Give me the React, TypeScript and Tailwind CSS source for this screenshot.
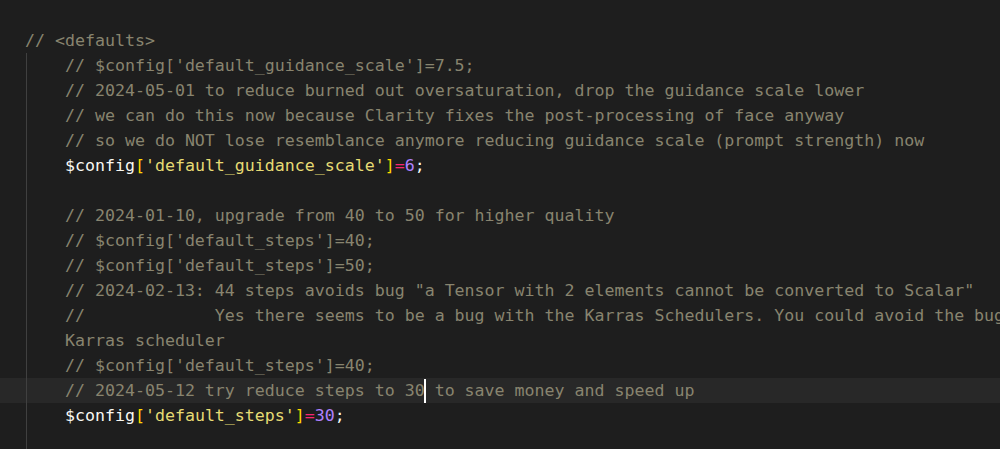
import React from 'react';

type Tok = { t: string; c: string };

const comment = 'text-[#88846f]';

const c = (t: string): Tok[] => [{ t, c: comment }];

const assign = (key: string, num: string): Tok[] => [
  { t: '$config', c: 'text-[#f8f8f2]' },
  { t: '[', c: 'text-[#ffd700]' },
  { t: `'${key}'`, c: 'text-[#e6db74]' },
  { t: ']', c: 'text-[#ffd700]' },
  { t: '=', c: 'text-[#f92672]' },
  { t: num, c: 'text-[#ae81ff]' },
  { t: ';', c: 'text-[#f8f8f2]' },
];

const lines: Tok[][] = [
  c("// $config['default_guidance_scale']=7.5;"),
  c('// 2024-05-01 to reduce burned out oversaturation, drop the guidance scale lower'),
  c('// we can do this now because Clarity fixes the post-processing of face anyway'),
  c('// so we do NOT lose resemblance anymore reducing guidance scale (prompt strength) now'),
  assign('default_guidance_scale', '6'),
  [],
  c('// 2024-01-10, upgrade from 40 to 50 for higher quality'),
  c("// $config['default_steps']=40;"),
  c("// $config['default_steps']=50;"),
  c('// 2024-02-13: 44 steps avoids bug "a Tensor with 2 elements cannot be converted to Scalar"'),
  c('//             Yes there seems to be a bug with the Karras Schedulers. You could avoid the bug'),
  c('Karras scheduler'),
  c("// $config['default_steps']=40;"),
  [
    { t: '// 2024-05-12 try reduce steps to 30', c: comment },
    { t: '|', c: 'cursor' },
    { t: ' to save money and speed up', c: comment },
  ],
  assign('default_steps', '30'),
  [],
];

const activeLine = 13;

export default function App() {
  return (
    <div
      className="w-[1000px] h-[449px] overflow-hidden bg-[#1e1e1e] pt-[28px] text-[16.6px] leading-[25px]"
      style={{ fontFamily: '"DejaVu Sans Mono", "Liberation Mono", monospace' }}
    >
      <div className="h-[25px] pl-[25px] whitespace-pre text-[#88846f]">{'// <defaults>'}</div>
      {lines.map((toks, i) => (
        <div
          key={i}
          className={`flex h-[25px] whitespace-pre ${i === activeLine ? 'bg-[#282828]' : ''}`}
        >
          <span className="ml-[26px] w-[39px] shrink-0 border-l border-[#404040]" />
          <span className="relative">
            {toks.map((tk, j) =>
              tk.c === 'cursor' ? (
                <span key={j} className="relative inline-block w-0 h-[25px] align-top">
                  <span className="absolute left-[-1px] top-[1px] h-[24px] w-[2px] bg-white" />
                </span>
              ) : (
                <span key={j} className={tk.c}>
                  {tk.t}
                </span>
              )
            )}
          </span>
        </div>
      ))}
    </div>
  );
}
